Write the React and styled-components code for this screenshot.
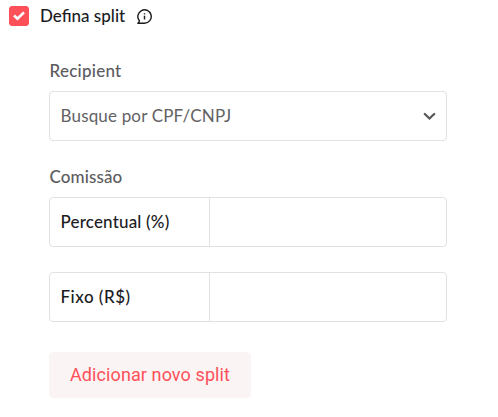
import React, { useState } from 'react';
import styled, { createGlobalStyle } from 'styled-components';

const GlobalStyle = createGlobalStyle`
* {
box-sizing: border-box;
}
body {
margin: 0;
background-color: #ffffff;
font-family: Lato, "Liberation Sans", sans-serif;
}
`

const Page = styled.div`
width: 498px;
height: 417px;
padding: 5px 51px 0 9px;
`

const Toggle = styled.label`
height: 22px;
display: flex;
align-items: center;
`

const HiddenInput = styled.input`
display: none;
`

const Box = styled.span`
width: 20px;
height: 20px;
display: flex;
justify-content: center;
align-items: center;
border-radius: 4px;
background-color: ${props => props.$checked ? '#fe5059' : '#ffffff'};
box-shadow: inset 0 0 0 1px ${props => props.$checked ? '#fe5059' : '#e0e0e3'};
`

const Text = styled.span`
font-size: 17px;
line-height: 22px;
font-weight: ${props => props.$weight || 500};
color: ${props => props.$color || '#1c1c1f'};
letter-spacing: ${props => props.$spacing || 0}px;
white-space: nowrap;
`

const ToggleText = styled(Text)`
margin: 0 11px 0 11px;
width: 86px;
`

const Form = styled.div`
margin: 33px 0 0 40px;
width: 398px;
display: flex;
flex-direction: column;
`

const Label = styled.div`
height: 22px;
margin-bottom: 9px;
padding-left: 0.5px;
display: flex;
`

const Select = styled.div`
height: 50px;
margin-bottom: 25px;
padding: 0 10px 0 10.5px;
display: flex;
justify-content: space-between;
align-items: center;
border: 1px solid #e2e2e4;
border-radius: 4px;
`

const Field = styled.div`
height: 50px;
margin-bottom: ${props => props.$gap}px;
display: flex;
border: 1px solid #e2e2e4;
border-radius: 4px;
`

const FieldName = styled.div`
width: 160px;
padding-left: 10.5px;
display: flex;
align-items: center;
border-right: 1px solid #e2e2e4;
`

const FieldInput = styled.input`
flex: 1;
min-width: 0;
padding: 0 11px;
border: 0;
outline: 0;
background: transparent;
font: inherit;
font-size: 17px;
`

const Button = styled.button`
width: 202px;
height: 46px;
padding: 0 0 1px;
border: 0;
border-radius: 4px;
background-color: #faf4f4;
color: #fe5059;
font-family: Roboto, "Liberation Sans", sans-serif;
font-size: 18px;
letter-spacing: 0.1px;
white-space: nowrap;
`

const CheckIcon = () => (
    <svg width="12" height="10" viewBox="0 0 12 10" fill="none">
        <path d="M1 4.5L4.5 7.7L11 1.4" stroke="#fff" strokeWidth="2.7" />
    </svg>
)

const InfoIcon = () => (
    <svg width="15" height="15" viewBox="0 0 15 15" fill="none">
        <path d="M0.8 14.2H7.5A6.7 6.7 0 1 0 2.4 11.8Q2.2 13.2 0.8 14.2Z" stroke="#1c1c1f" strokeWidth="1.4" strokeLinejoin="round" />
        <path d="M7.5 6.8V10.6M7.5 4.2V5.6" stroke="#1c1c1f" strokeWidth="1.4" />
    </svg>
)

const ChevronIcon = () => (
    <svg width="13" height="9" viewBox="0 0 13 9" fill="none">
        <path d="M1.8 2L6.5 6.5L11.2 2" stroke="#58585a" strokeWidth="2.3" strokeLinecap="round" />
    </svg>
)

function SplitForm() {

    const [checked, setChecked] = useState(true);

    return (
        <Page>
            <Toggle>
                <HiddenInput type="checkbox" checked={checked} onChange={() => setChecked(!checked)} />
                <Box $checked={checked}>
                    <CheckIcon />
                </Box>
                <ToggleText>Defina split</ToggleText>
                <InfoIcon />
            </Toggle>

            <Form>
                <Label>
                    <Text $color="#5c5c5e" $spacing={0.25}>Recipient</Text>
                </Label>
                <Select>
                    <Text $color="#626264" $weight={400} $spacing={0.17}>Busque por CPF/CNPJ</Text>
                    <ChevronIcon />
                </Select>

                <Label>
                    <Text $color="#5c5c5e" $spacing={0.1}>Comissão</Text>
                </Label>
                <Field $gap={25}>
                    <FieldName>
                        <Text $spacing={0.17}>Percentual (%)</Text>
                    </FieldName>
                    <FieldInput />
                </Field>
                <Field $gap={30}>
                    <FieldName>
                        <Text $spacing={0.5}>Fixo (R$)</Text>
                    </FieldName>
                    <FieldInput />
                </Field>

                <Button type="button">Adicionar novo split</Button>
            </Form>
        </Page>
    )
}

export default function App() {
    return (
        <>
            <GlobalStyle />
            <SplitForm />
        </>
    )
}
